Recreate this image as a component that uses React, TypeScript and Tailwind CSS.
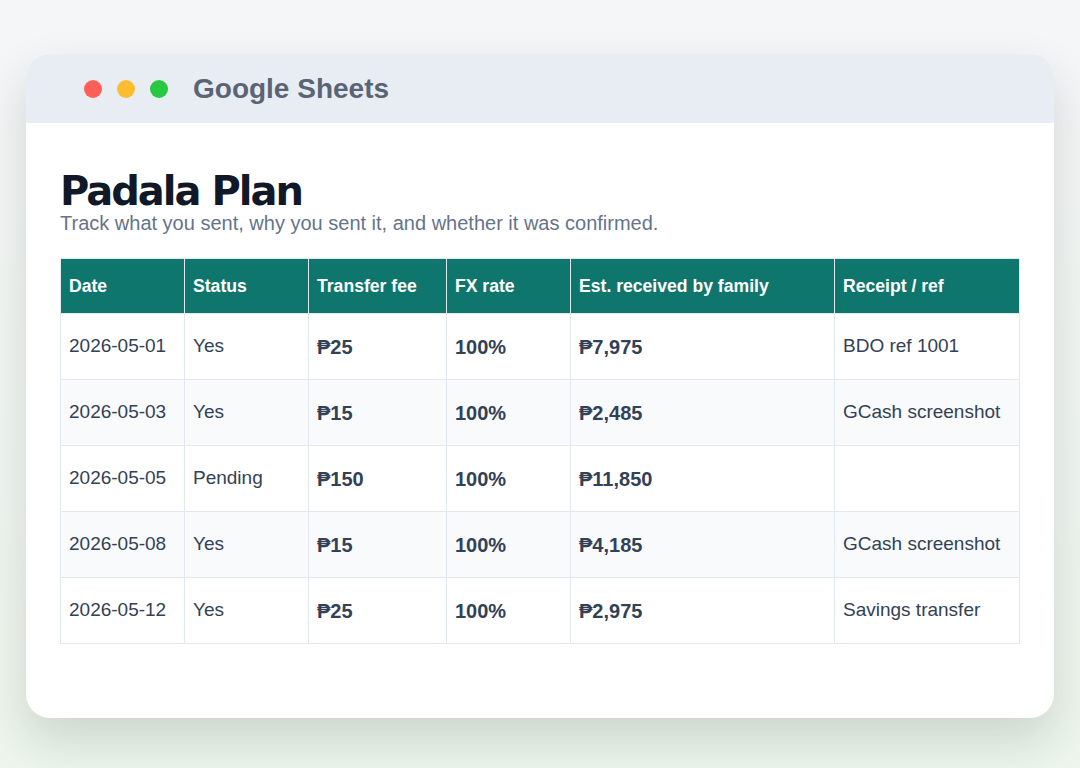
const rows = [
  { date: '2026-05-01', status: 'Yes', fee: '₱25', fx: '100%', est: '₱7,975', ref: 'BDO ref 1001' },
  { date: '2026-05-03', status: 'Yes', fee: '₱15', fx: '100%', est: '₱2,485', ref: 'GCash screenshot' },
  { date: '2026-05-05', status: 'Pending', fee: '₱150', fx: '100%', est: '₱11,850', ref: '' },
  { date: '2026-05-08', status: 'Yes', fee: '₱15', fx: '100%', est: '₱4,185', ref: 'GCash screenshot' },
  { date: '2026-05-12', status: 'Yes', fee: '₱25', fx: '100%', est: '₱2,975', ref: 'Savings transfer' },
];

const headers = ['Date', 'Status', 'Transfer fee', 'FX rate', 'Est. received by family', 'Receipt / ref'];

export default function App() {
  return (
    <div className="min-h-[768px] bg-gradient-to-b from-[#f5f6f8] to-[#edf5ec] px-[26px] pt-[54px] pb-[50px] font-['Liberation_Sans',Arial,sans-serif]">
      <div className="h-[664px] rounded-[24px] bg-white overflow-hidden shadow-[0_22px_48px_rgba(30,50,40,0.16)]">
        {/* Window bar */}
        <div className="h-[69px] bg-[#e8edf4] flex items-center pl-[58px]">
          <div className="flex items-center gap-[15px]">
            <span className="w-[18px] h-[18px] rounded-full bg-[#ff5f57]" />
            <span className="w-[18px] h-[18px] rounded-full bg-[#febc2e]" />
            <span className="w-[18px] h-[18px] rounded-full bg-[#28c840]" />
          </div>
          <span className="ml-[25px] text-[28px] font-bold text-[#5b6475]">Google Sheets</span>
        </div>

        {/* Sheet */}
        <div className="px-[34px] pt-[48px]">
          <h1 className="text-[40px] leading-[40px] font-black tracking-[-2px] text-[#111827] font-['DejaVu_Sans',sans-serif]">
            Padala Plan
          </h1>
          <p className="text-[20px] leading-[24px] text-[#64748b]">
            Track what you sent, why you sent it, and whether it was confirmed.
          </p>

          <table className="mt-[23px] w-full table-fixed border-collapse">
            <colgroup>
              <col className="w-[124px]" />
              <col className="w-[124px]" />
              <col className="w-[138px]" />
              <col className="w-[124px]" />
              <col className="w-[264px]" />
              <col />
            </colgroup>
            <thead>
              <tr className="h-[55px] bg-[#0f766e]">
                {headers.map((h) => (
                  <th
                    key={h}
                    className="border border-[#e2e8f0] px-[8px] text-left text-[17.6px] font-bold text-white"
                  >
                    {h}
                  </th>
                ))}
              </tr>
            </thead>
            <tbody>
              {rows.map((r, i) => (
                <tr key={r.date} className={`h-[66px] ${i % 2 === 1 ? 'bg-[#f8fafc]' : 'bg-white'}`}>
                  <td className="border border-[#e2e8f0] px-[8px] text-[19px] text-[#334155]">{r.date}</td>
                  <td className="border border-[#e2e8f0] px-[8px] text-[19px] text-[#334155]">{r.status}</td>
                  <td className="border border-[#e2e8f0] px-[8px] text-[20px] font-bold text-[#334155]">{r.fee}</td>
                  <td className="border border-[#e2e8f0] px-[8px] text-[20px] font-bold text-[#334155]">{r.fx}</td>
                  <td className="border border-[#e2e8f0] px-[8px] text-[20px] font-bold text-[#334155]">{r.est}</td>
                  <td className="border border-[#e2e8f0] px-[8px] text-[19px] text-[#334155]">{r.ref}</td>
                </tr>
              ))}
            </tbody>
          </table>
        </div>
      </div>
    </div>
  );
}
